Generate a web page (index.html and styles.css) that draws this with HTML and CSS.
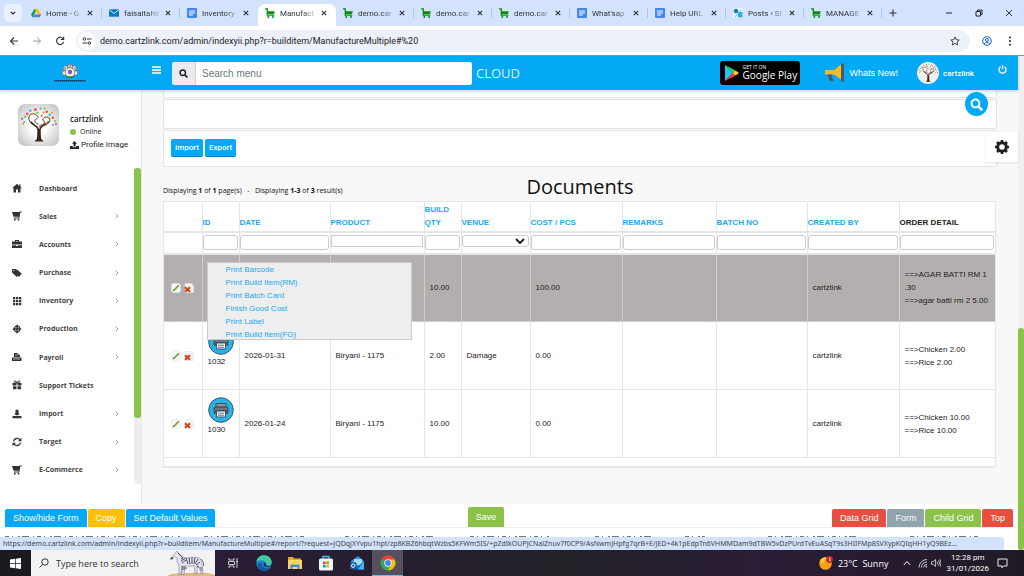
FILE: index.html
```html
<!DOCTYPE html>
<html lang="en">
<head>
<meta charset="utf-8">
<title>Manufacture Multiple</title>
<link rel="stylesheet" href="styles.css">
</head>
<body>
<svg class="sprite" aria-hidden="true">
  <symbol id="cart" viewBox="0 0 10 10"><path d="M0 .9h2.3v6.3h7" fill="none" stroke="#0b8a0b" stroke-width="1.3"/><path d="M2.3 3.200h7.5L9 6H2.3z" fill="#0b8a0b"/><circle cx="3.3" cy="9" r="1" fill="#0b8a0b"/><circle cx="8" cy="9" r="1" fill="#0b8a0b"/></symbol>
  <symbol id="doc" viewBox="0 0 10 10"><rect width="10" height="10" rx="1" fill="#4285f4"/><path d="M2 3h6M2 5h6M2 7h4" stroke="#fff" stroke-width="1"/></symbol>
  <symbol id="x" viewBox="0 0 6 6"><path d="M.8.8l4.4 4.4M5.2.8L.8 5.2" stroke="#333" stroke-width="1.1"/></symbol>
  <symbol id="lens" viewBox="0 0 10 10"><circle cx="4.2" cy="4.2" r="3" fill="none" stroke="currentColor" stroke-width="1.6"/><path d="M6.4 6.4L9.4 9.4" stroke="currentColor" stroke-width="1.9"/></symbol>
  <symbol id="tree" viewBox="0 0 40 40">
    <path d="M19 24h3l.5 9.500 2.500 2.500h-9l2.500-2.500z" fill="#3a2317"/>
    <path d="M20 25c-1-4-4-5-8-8M21 25c1-4 4-5 9-8" fill="none" stroke="#3a2317" stroke-width="1.500"/>
    <path d="M19 22c-5-2-10-6-8-11 2-3 7-3 9 2M20 22c5-1 12-3 11-8-2-3-6-2-7 1M20 19c-5-1-4-5-1-5M21 20c5 1 6-4 3-5" fill="none" stroke="#4a2d20" stroke-width=".9"/>
    <g fill="#e8436b"><circle cx="9" cy="9" r="1.300"/><circle cx="17" cy="5" r="1.300"/><circle cx="28" cy="7" r="1.200"/><circle cx="34" cy="13" r="1.200"/><circle cx="4" cy="14" r="1"/><circle cx="23" cy="11" r="1"/><circle cx="37" cy="19" r="1"/></g>
    <g fill="#46b3d8"><circle cx="12" cy="6" r="1.200"/><circle cx="22" cy="4" r="1.100"/><circle cx="31" cy="10" r="1.200"/><circle cx="6" cy="17" r="1"/><circle cx="34" cy="20" r="1"/></g>
    <g fill="#7fc241"><circle cx="7" cy="12" r="1.200"/><circle cx="19" cy="8" r="1.200"/><circle cx="26" cy="4" r="1"/><circle cx="30" cy="13" r="1"/><circle cx="36" cy="16" r="1"/></g>
    <g fill="#f29a2e"><circle cx="14" cy="9" r="1"/><circle cx="25" cy="8" r="1.100"/><circle cx="5" cy="19" r="1"/><circle cx="33" cy="8" r="1"/><circle cx="28" cy="18" r="1"/></g>
  </symbol>
  <symbol id="chev" viewBox="0 0 4 6"><path d="M.8.8L3 3 .8 5.200" fill="none" stroke="#888" stroke-width=".8"/></symbol>
  <symbol id="basket" viewBox="0 0 10 10"><path d="M0 1h7.500L7 5.800H1.500zM1.800 6.600h5.400v.8H1.800zM7.500.4H10v.9H8.400L7.300 7.400h-.9z"/><circle cx="2.800" cy="8.700" r=".9"/><circle cx="6.500" cy="8.700" r=".9"/></symbol>
  <symbol id="printer" viewBox="0 0 26 26"><circle cx="13" cy="13" r="12.300" fill="#27b3e6" stroke="#3c5663" stroke-width="1"/><path d="M8 6.500h10v3.500H8z" fill="#8a979d" stroke="#344049" stroke-width=".8"/><rect x="5.500" y="9.500" width="15" height="7.500" rx="1.500" fill="#4b5760"/><path d="M7 12h12" stroke="#8c9aa2"/><path d="M8.500 14h9v6h-9z" fill="#e4ecef" stroke="#344049" stroke-width=".8"/><path d="M10 16.300h6M10 18.300h6" stroke="#667" stroke-width=".8"/></symbol>
  <symbol id="pencil" viewBox="0 0 10 10"><rect x=".5" y=".5" width="9" height="9" rx="2" fill="#f7f7f5" stroke="#e6e6e4" stroke-width=".5"/><path d="M1.500 8.500l1-2.200 1.300 1.200z" fill="#3b5b25"/><path d="M2.700 6.500l3.400-3.700L7.400 4 4 7.600z" fill="#6aa83a"/><path d="M6.100 2.800l1-1 1.400 1.300-1.100 1z" fill="#c66a4a"/></symbol>
  <symbol id="del" viewBox="0 0 10 10"><path d="M1 .5h6.500L9.500 3v6.500H1z" fill="#f6f3f2" stroke="#e4e0de" stroke-width=".5"/><path d="M1 4.200l5 4.600M6 4.200L1 8.800" stroke="#d8401c" stroke-width="2.200"/></symbol>
</svg>

<header class="tabs">
  <button class="tab-menu" aria-label="Search tabs"><svg width="6" height="4" viewBox="0 0 6 4"><path d="M.8.8L3 3 5.200.8" fill="none" stroke="#222" stroke-width="1.200"/></svg></button>
  <div class="tab"><svg class="fav" viewBox="0 0 10 10"><path d="M3.500.8h3L10 6.600H7z" fill="#fbbc04"/><path d="M3.500.8L0 6.600 1.500 9.200 5 3.300z" fill="#0f9d58"/><path d="M3 6.600h7L8.500 9.200h-7z" fill="#4285f4"/><path d="M7.300 6.600H10L8.500 9.200z" fill="#ea4335"/></svg><span class="tab-title">Home - G</span><svg class="close"><use href="#x"/></svg></div>
  <div class="tab"><svg class="fav" viewBox="0 0 10 10"><path d="M0 1.300h10v7.400H0z" fill="#0a78c2"/><path d="M0 1.500l5 4 5-4" fill="none" stroke="#cfe9fb"/></svg><span class="tab-title">faisaltahir</span><svg class="close"><use href="#x"/></svg></div>
  <div class="tab before-active"><svg class="fav"><use href="#doc"/></svg><span class="tab-title">Inventory</span><svg class="close"><use href="#x"/></svg></div>
  <div class="tab active"><svg class="fav"><use href="#cart"/></svg><span class="tab-title">Manufact</span><svg class="close"><use href="#x"/></svg></div>
  <div class="tab"><svg class="fav"><use href="#cart"/></svg><span class="tab-title">demo.car</span><svg class="close"><use href="#x"/></svg></div>
  <div class="tab"><svg class="fav"><use href="#cart"/></svg><span class="tab-title">demo.car</span><svg class="close"><use href="#x"/></svg></div>
  <div class="tab"><svg class="fav"><use href="#cart"/></svg><span class="tab-title">demo.car</span><svg class="close"><use href="#x"/></svg></div>
  <div class="tab"><svg class="fav"><use href="#doc"/></svg><span class="tab-title">What'sap</span><svg class="close"><use href="#x"/></svg></div>
  <div class="tab"><svg class="fav"><use href="#doc"/></svg><span class="tab-title">Help URL</span><svg class="close"><use href="#x"/></svg></div>
  <div class="tab"><svg class="fav" viewBox="0 0 10 10"><rect width="10" height="10" fill="#e8f4fa"/><circle cx="3" cy="3" r="2.300" fill="#27769c"/><rect x="5" y="4" width="4.500" height="5.500" fill="#35b0dd"/><path d="M2 9l6-7" stroke="#69c3e4"/></svg><span class="tab-title">Posts ‹ St</span><svg class="close"><use href="#x"/></svg></div>
  <div class="tab"><svg class="fav"><use href="#cart"/></svg><span class="tab-title">MANAGE</span><svg class="close"><use href="#x"/></svg></div>
  <button class="new-tab" aria-label="New tab"><svg width="8" height="8" viewBox="0 0 8 8"><path d="M4 .5v7M.5 4h7" stroke="#333" stroke-width="1.100"/></svg></button>
  <div class="window-buttons">
    <button aria-label="Minimize"><svg viewBox="0 0 8 8"><path d="M1 4h6" stroke="#222"/></svg></button>
    <button aria-label="Restore"><svg viewBox="0 0 8 8"><path d="M1 2.500h4.500V7H1zM2.500 2.500V1H7v4.500H5.500" fill="none" stroke="#222"/></svg></button>
    <button aria-label="Close"><svg viewBox="0 0 8 8"><path d="M1 1l6 6M7 1L1 7" stroke="#222" stroke-width=".9"/></svg></button>
  </div>
</header>

<nav class="toolbar">
  <button aria-label="Back"><svg viewBox="0 0 10 10"><path d="M9 5H1.500M5 1.500L1.500 5 5 8.500" fill="none" stroke="#333" stroke-width="1.100"/></svg></button>
  <button aria-label="Forward"><svg viewBox="0 0 10 10"><path d="M1 5h7.500M5 1.500L8.500 5 5 8.500" fill="none" stroke="#999" stroke-width="1"/></svg></button>
  <button aria-label="Reload"><svg viewBox="0 0 10 10"><path d="M8.300 3.200A3.600 3.600 0 1 0 8.600 5.800M8.700.8v2.700H6" fill="none" stroke="#333" stroke-width="1.100"/></svg></button>
  <div class="address">
    <span class="site-info"><svg viewBox="0 0 10 10"><path d="M5 3h4.500M.5 7H5" stroke="#333"/><circle cx="2.500" cy="3" r="1.300" fill="none" stroke="#333"/><circle cx="7.300" cy="7" r="1.300" fill="none" stroke="#333"/></svg></span>
    <input class="url" type="text" aria-label="Address" value="demo.cartzlink.com/admin/indexyii.php?r=builditem/ManufactureMultiple#%20">
    <svg class="star" viewBox="0 0 10 10"><path d="M5 .9l1.200 2.800 3 .3L7 6l.7 3L5 7.400 2.300 9 3 6 .8 4l3-.3z" fill="none" stroke="#333" stroke-width=".9"/></svg>
  </div>
  <button aria-label="Profile"><svg class="person" viewBox="0 0 10 10" fill="none" stroke="#1f5fd0"><circle cx="5" cy="5" r="4.300"/><circle cx="5" cy="4" r="1.500"/><path d="M2.200 8c1-2 4.600-2 5.600 0"/></svg></button>
  <button aria-label="More"><svg viewBox="0 0 10 10"><circle cx="5" cy="1.300" r=".9"/><circle cx="5" cy="5" r=".9"/><circle cx="5" cy="8.700" r=".9"/></svg></button>
</nav>

<div class="window">
  <div class="page">
    <header class="app-header">
      <a class="logo" href="#" aria-label="Home"><svg viewBox="0 0 34 20"><g fill="#f5f0e6" stroke="#555" stroke-width=".6"><circle cx="17" cy="3.500" r="2.300"/><circle cx="12.500" cy="5" r="2.300"/><circle cx="21.500" cy="5" r="2.300"/><circle cx="11.500" cy="10" r="2.300"/><circle cx="22.500" cy="10" r="2.300"/><circle cx="17" cy="9.500" r="4.800"/></g><circle cx="17" cy="9" r="2.200" fill="#8a5b94"/><path d="M13 14h8" stroke="#3e7a44" stroke-width="1.500"/><g fill="#7a2a70"><circle cx="17" cy="3" r=".8"/><circle cx="12" cy="5" r=".8"/><circle cx="22" cy="5" r=".8"/></g><path d="M1 17.800h32" stroke="#0c3350" stroke-width="1.500" stroke-dasharray="1.600 .4"/></svg></a>
      <button class="burger" aria-label="Menu"><svg viewBox="0 0 9 8"><path d="M0 1h9M0 4h9M0 7h9" stroke="#fff" stroke-width="1.500"/></svg></button>
      <div class="search"><label for="q" aria-label="Search menu"><svg><use href="#lens"/></svg></label><input id="q" type="text" placeholder="Search menu"></div>
      <span class="cloud">CLOUD</span>
      <a class="play" href="#"><svg viewBox="0 0 14 16"><path d="M0 0v16l7.500-8z" fill="#1cc8f0"/><path d="M0 0l10.500 5.500L7.500 8z" fill="#2bd36b"/><path d="M0 16l10.500-5.500L7.500 8z" fill="#ef4050"/><path d="M10.500 5.500L14 8l-3.500 2.500L7.500 8z" fill="#ffca28"/></svg><span class="play-text"><small>GET IT ON</small><b>Google Play</b></span></a>
      <a class="news" href="#"><svg viewBox="0 0 20 20"><path d="M0 7h9l7-5.500v15L9 11.500H0z" fill="#fbb829"/><path d="M16 .5h3v18h-3zM2.500 11.500h4l2 6.500h-4z" fill="#4a5a68"/></svg><span>Whats New!</span></a>
      <a class="user" href="#"><svg><use href="#tree"/></svg><span>cartzlink</span></a>
      <button class="power" aria-label="Log out"><svg viewBox="0 0 8 8"><path d="M2.200 1.600a3.100 3.100 0 1 0 3.600 0M4 .3v3.500" fill="none" stroke="#fff" stroke-width="1.200"/></svg></button>
    </header>

    <div class="body">
      <aside class="sidebar">
        <section class="profile">
          <svg class="photo"><use href="#tree"/></svg>
          <div class="who"><b>cartzlink</b><span class="online"><i></i>Online</span><a href="#"><svg viewBox="0 0 9 8"><path d="M4.500 0L7 2.800H5.500v2.700h-2V2.800H2zM0 5h2.700v1.300h3.600V5H9v3H0z" fill="#222"/></svg>Profile Image</a></div>
        </section>
        <div class="menu-wrap">
          <ul class="menu">
            <li><a href="#"><svg viewBox="0 0 10 10"><path d="M5 .8L0 5.300h1.500V9.500H4V6.500h2v3h2.500V5.300H10L8.500 4V1.300H7.300V2.900z"/></svg><span>Dashboard</span></a></li>
            <li><a href="#"><svg><use href="#basket"/></svg><span>Sales</span><svg class="chev"><use href="#chev"/></svg></a></li>
            <li><a href="#"><svg viewBox="0 0 10 10"><path d="M3 1h4v1.500h3V5.500H0V2.500h3zM4 2v.5h2V2zM0 6.200h4V7h2v-.8h4V9H0z"/></svg><span>Accounts</span><svg class="chev"><use href="#chev"/></svg></a></li>
            <li><a href="#"><svg viewBox="0 0 10 10"><path d="M0 1h3.500L8 5.500 4.800 9 0 4.500zM4.500 1L9.800 5.700 6.500 9.300"/><circle cx="1.700" cy="2.600" r=".7" fill="#fff"/></svg><span>Purchase</span><svg class="chev"><use href="#chev"/></svg></a></li>
            <li><a href="#"><svg viewBox="0 0 10 10"><path d="M1 1h2.300v2.300H1zM4 1h2.300v2.300H4zM7 1h2.300v2.300H7zM1 4h2.300v2.300H1zM4 4h2.300v2.300H4zM7 4h2.300v2.300H7zM1 7h2.300v2.300H1zM4 7h2.300v2.300H4zM7 7h2.300v2.300H7z"/></svg><span>Inventory</span><svg class="chev"><use href="#chev"/></svg></a></li>
            <li><a href="#"><svg viewBox="0 0 10 10"><circle cx="5" cy="5" r="2.800" fill="none" stroke="#333" stroke-width="1.200"/><path d="M5 .8v8.400M.8 5h8.400" stroke="#333" stroke-width="1.500"/></svg><span>Production</span><svg class="chev"><use href="#chev"/></svg></a></li>
            <li><a href="#"><svg viewBox="0 0 10 10"><path d="M2 5V1h3l3 2.500V5zM0 5.500h9.500V9H0z"/><path d="M3 3h3M1 7h7" stroke="#fff" stroke-width=".6"/></svg><span>Payroll</span><svg class="chev"><use href="#chev"/></svg></a></li>
            <li><a href="#"><svg viewBox="0 0 10 10"><path d="M.5 3h4v2.500h-4zM5.500 3h4v2.500h-4zM1 6.200h3.500v3H1zM5.500 6.200H9v3H5.500z"/><path d="M5 3C3 3 2 2.500 2.200 1.300 3.500.5 4.500 1.300 5 3 5.500 1.300 6.500.5 7.800 1.300 8 2.500 7 3 5 3z" fill="none" stroke="#333"/></svg><span>Support Tickets</span></a></li>
            <li><a href="#"><svg viewBox="0 0 10 10"><path d="M3.500.8h3V4l1 1-1.500 1.300H4L2.500 5l1-1zM.5 7h9v2.300h-9z"/></svg><span>Import</span><svg class="chev"><use href="#chev"/></svg></a></li>
            <li><a href="#"><svg viewBox="0 0 10 10"><path d="M1.500 4.300A3.600 3.600 0 0 1 8 3M8.500 5.700A3.600 3.600 0 0 1 2 7" fill="none" stroke="#333" stroke-width="1.300"/><path d="M9.500.8v3.400H6zM.5 9.200V5.800H4z"/></svg><span>Target</span><svg class="chev"><use href="#chev"/></svg></a></li>
            <li><a href="#"><svg><use href="#basket"/></svg><span>E-Commerce</span><svg class="chev"><use href="#chev"/></svg></a></li>
          </ul>
          <div class="menu-track"><div class="menu-thumb"></div></div>
        </div>
      </aside>

      <main class="content">
        <button class="find" aria-label="Search"><svg><use href="#lens"/></svg></button>
        <button class="settings" aria-label="Settings"><svg viewBox="0 0 16 16"><circle cx="8" cy="8" r="4.300" fill="none" stroke="#222" stroke-width="3"/><path d="M8 1v3M8 12v3M1 8h3M12 8h3M3 3l2 2M11 11l2 2M3 13l2-2M11 5l2-2" stroke="#222" stroke-width="2.600"/></svg></button>
        <div class="panel cut"></div>
        <div class="panel blank"></div>
        <div class="panel tools"><button>Import</button><button>Export</button></div>
        <div class="caption">
          <p>Displaying <b>1</b> of <b>1</b> page(s) &nbsp; - &nbsp; Displaying <b>1-3</b> of <b>3</b> result(s)</p>
          <h1>Documents</h1>
        </div>
        <div class="grid">
          <table>
            <colgroup><col class="w38"><col class="w37"><col class="w91"><col class="w94"><col class="w37"><col class="w69"><col class="w92"><col class="w94"><col class="w91"><col class="w92"><col class="w97"></colgroup>
            <thead>
              <tr class="heads"><th></th><th><a href="#">ID</a></th><th><a href="#">DATE</a></th><th><a href="#">PRODUCT</a></th><th><a href="#">BUILD QTY</a></th><th><a href="#">VENUE</a></th><th><a href="#">COST / PCS</a></th><th><a href="#">REMARKS</a></th><th><a href="#">BATCH NO</a></th><th><a href="#">CREATED BY</a></th><th>ORDER DETAIL</th></tr>
              <tr class="filters"><td></td><td><input type="text" aria-label="ID"></td><td><input type="text" aria-label="Date"></td><td><input class="flat" type="text" aria-label="Product"></td><td><input type="text" aria-label="Build qty"></td><td><select aria-label="Venue"><option></option></select></td><td><input type="text" aria-label="Cost / pcs"></td><td><input type="text" aria-label="Remarks"></td><td><input type="text" aria-label="Batch no"></td><td><input type="text" aria-label="Created by"></td><td><input type="text" aria-label="Order detail"></td></tr>
            </thead>
            <tbody>
              <tr class="selected"><td class="act"><svg><use href="#pencil"/></svg><svg><use href="#del"/></svg></td><td class="pop-cell">
                <ul class="print-menu"><li><a href="#">Print Barcode</a></li><li><a href="#">Print Build Item(RM)</a></li><li><a href="#">Print Batch Card</a></li><li><a href="#">Finish Good Cost</a></li><li><a href="#">Print Label</a></li><li><a href="#">Print Build Item(FG)</a></li></ul>
              </td><td></td><td></td><td>10.00</td><td></td><td>100.00</td><td></td><td></td><td>cartzlink</td><td>==&gt;AGAR BATTI RM 1 .30<br>==&gt;agar batti rm 2 5.00</td></tr>
              <tr><td class="act"><svg><use href="#pencil"/></svg><svg><use href="#del"/></svg></td><td class="id"><svg><use href="#printer"/></svg>1032</td><td>2026-01-31</td><td>Biryani - 1175</td><td>2.00</td><td>Damage</td><td>0.00</td><td></td><td></td><td>cartzlink</td><td>==&gt;Chicken 2.00<br>==&gt;Rice 2.00</td></tr>
              <tr><td class="act"><svg><use href="#pencil"/></svg><svg><use href="#del"/></svg></td><td class="id"><svg><use href="#printer"/></svg>1030</td><td>2026-01-24</td><td>Biryani - 1175</td><td>10.00</td><td></td><td>0.00</td><td></td><td></td><td>cartzlink</td><td>==&gt;Chicken 10.00<br>==&gt;Rice 10.00</td></tr>
            </tbody>
          </table>
        </div>
      </main>
    </div>

    <footer class="actions">
      <div class="group"><button class="blue">Show/hide Form</button><button class="amber">Copy</button><button class="blue">Set Default Values</button></div>
      <button class="green save">Save</button>
      <div class="group end"><button class="red">Data Grid</button><button class="slate">Form</button><button class="green">Child Grid</button><button class="red">Top</button></div>
    </footer>
    <div class="status-zone">
      <svg class="fringe" viewBox="0 0 1018 2" preserveAspectRatio="none"><path d="M5 1.500h175M204 1.500h100M345 1.500h90M470 1.500h80M595 1.500h60M685 1.500h20M768 1.500h92M910 1.500h70" stroke="#777" stroke-width="1" stroke-dasharray="4 3 1 5 2 2 7 4 1 3"/></svg>
      <div class="status">https://demo.cartzlink.com/admin/indexyii.php?r=builditem/ManufactureMultiple#/report/?request=JQDqjXYvpu1hpt/zp8KBZ6hbqtWzbs5KFWm5IS/+pZdIkOUPJCNalZnuv7f0CP9/AsNwmJHpfg7qrB+E/JED+4k1pEdpTn6VHMMDam9dTBW5vDzPUrdTvEuASqT9s3HIIFMp8SVXypKQIqHH1yQ9BEz...</div>
    </div>
  </div>
  <div class="page-track"><div class="page-thumb"></div></div>
</div>

<footer class="taskbar">
  <button class="start" aria-label="Start"><svg viewBox="0 0 11 11"><path d="M0 1.500L5 .8v4.400H0zM5.700.7L11 0v5.200H5.700zM0 5.900h5v4.300l-5-.7zM5.700 5.900H11V11l-5.300-.7z" fill="#fff"/></svg></button>
  <div class="task-search"><svg class="task-lens" viewBox="0 0 10 10"><circle cx="6" cy="4" r="3.200" fill="none" stroke="#222" stroke-width=".9"/><path d="M3.700 6.300L.5 9.500" stroke="#222" stroke-width=".9"/></svg><input type="text" aria-label="Search" placeholder="Type here to search">
    <svg class="zebra" viewBox="0 0 48 26">
      <path d="M0 26c4-3 14-3 22-3s19-1 26 2v1z" fill="#e2b683"/>
      <path d="M4 8l4-4.500L10 1l2 2.500 4 4c5 1 10-1 15 0 3 1 4 4 4 7l1 9h-2l-2-7-2-1 0 8h-2l-1-8c-3 1-6 1-9 0l-1 9h-2l0-9-1 9h-2l0-10c-2-1-2-3-2-6l-2-2-5 3z" fill="#e6e3ee" stroke="#6a6580" stroke-width=".5"/>
      <path d="M11 3l5 5M14 9l2-1M14 11l4-2.500M15 13l4-3M19 8l2 6M22 8l1 6M25 7.500v6.500M28 7.500l-1 6M31 9l-3 5M33 12l-4 3M15 17h3M15 19h3M18 18h2M30 17h2M33 18h2M33.500 20h2" stroke="#4b4666" stroke-width="1"/>
      <path d="M4 8l2 .8" stroke="#333" stroke-width="1.500"/><path d="M34 9c2 2 3 4 2.500 7" fill="none" stroke="#4b4666" stroke-width=".8"/>
    </svg>
  </div>
  <div class="apps">
    <button aria-label="Task view"><svg viewBox="0 0 12 12"><path d="M2 1v2h5V1M2 11V9h5v2M1.500 4.500h6v3h-6zM10 1v10M9 4.500h2" fill="none" stroke="#ddd" stroke-width=".9"/></svg></button>
    <button aria-label="Edge"><svg class="big" viewBox="0 0 16 16"><circle cx="8" cy="8" r="7.700" fill="#1687d4"/><path d="M.5 7C1 3 4 .3 8 .3c5 0 7.700 3.700 7.700 6.700 0 3-3 4-5.500 3.200C11 8 10 6 7 5.500 4 5 2 5.500.5 7z" fill="#45c9a0"/><path d="M6 8c-1 3 2 6 7 5-3 3.500-9 3.200-11-1C1 9 3 7 6 8z" fill="#1258a8"/><path d="M8 8c1.500-.5 2.500 1 1.700 2.300 1.500 1.200 3.500.9 5.300-.1-1 1.600-3 2-4.800 1.600C8 11.300 6.800 9.500 8 8z" fill="#2a2030"/></svg></button>
    <button aria-label="File Explorer"><svg class="big" viewBox="0 0 16 16"><path d="M1 2h5l1 1.500h7V8H1z" fill="#e5a92a"/><path d="M1 5h14v9H1z" fill="#ffd561"/><path d="M3.500 9.500h9V14h-2v-2h-5v2h-2z" fill="#3d8fd1"/></svg></button>
    <button aria-label="Store"><svg class="big" viewBox="0 0 16 16"><path d="M5 4V1.500h6V4" fill="none" stroke="#58b7e8" stroke-width="1.300"/><rect x="1" y="3.500" width="14" height="12" rx="1.500" fill="#f2f6fa"/><path d="M5 6.500h2.700v2.700H5z" fill="#f25022"/><path d="M8.300 6.500H11v2.700H8.300z" fill="#7fba00"/><path d="M5 9.800h2.700v2.700H5z" fill="#00a4ef"/><path d="M8.300 9.800H11v2.700H8.300z" fill="#ffb900"/></svg></button>
    <button aria-label="Outlook"><svg class="big" viewBox="0 0 16 16"><path d="M2 6l7-5 6 5v8H3z" fill="#2f8fe8"/><path d="M5 4h8v6H5z" fill="#9fdcff"/><path d="M3 8l6 3.500L15 6v8.500H3z" fill="#1766c4"/><path d="M15 6v8.500H9z" fill="#43b5f5"/><rect x="1" y="7.500" width="6.500" height="6.500" rx="1" fill="#0e57a8"/><circle cx="4.200" cy="10.700" r="1.700" fill="none" stroke="#fff"/></svg></button>
    <button class="running" aria-label="Chrome"><svg class="big" viewBox="0 0 16 16"><circle cx="8" cy="8" r="7.500" fill="#34a853"/><path d="M8 8L1.500 4.200A7.500 7.500 0 0 1 14.500 4.200z" fill="#ea4335"/><path d="M8 4.500h6.600A7.500 7.500 0 0 1 8 15.500L11 9.700z" fill="#fbbc04"/><circle cx="8" cy="8" r="3.700" fill="#fff"/><circle cx="8" cy="8" r="2.900" fill="#4285f4"/></svg></button>
  </div>
  <div class="tray">
    <svg class="sun" viewBox="0 0 14 14"><circle cx="6.500" cy="7.500" r="6.300" fill="#f9a01b"/><path d="M1 5a6.300 6.300 0 0 1 7-3.500L3 8z" fill="#ffc83d"/><circle cx="10.500" cy="3.500" r="3.400" fill="#c42b1c"/><path d="M10 2.500l.8-.6v3.400" stroke="#fff" stroke-width=".8" fill="none"/></svg>
    <span class="weather">23°C&nbsp; Sunny</span>
    <svg class="up" viewBox="0 0 8 6"><path d="M.8 5L4 1.500 7.200 5" fill="none" stroke="#fff"/></svg>
    <svg class="net" viewBox="0 0 10 10" fill="none" stroke="#ddd" stroke-width=".9"><path d="M1 9.500A8 8 0 0 1 9 1.500M3.300 9.500A6 6 0 0 1 9 4M5.500 9.500A4 4 0 0 1 9 6.300"/><circle cx="8.300" cy="8.700" r=".6"/></svg>
    <svg class="net" viewBox="0 0 10 10" fill="none" stroke="#ddd" stroke-width=".8"><path d="M.5 3.700h1.700L4.500 1.500v7L2.200 6.300H.5zM6 3.500q1 1.500 0 3M7.500 2.300q2 2.700 0 5.400M9 1.300q2 3.700 0 7.400"/></svg>
    <span class="clock">12:28 pm<br>31/01/2026</span>
    <svg class="note" viewBox="0 0 11 11"><path d="M1 1h9v7H6.500L5 9.800V8H1z" fill="none" stroke="#fff" stroke-width=".9"/></svg>
  </div>
</footer>
</body>
</html>
```

FILE: styles.css
```css
* { box-sizing: border-box; }
body { margin: 0; min-height: 100vh; display: flex; flex-direction: column; font-family: "Open Sans", sans-serif; font-size: 8px; color: #222; background: #fff; }
button { border: 0; padding: 0; margin: 0; background: none; font: inherit; color: inherit; display: flex; align-items: center; justify-content: center; }
input, select { font: inherit; color: inherit; min-width: 0; margin: 0; }
a { color: inherit; text-decoration: none; }
ul { list-style: none; margin: 0; padding: 0; }
svg { display: block; flex: none; }
.sprite { position: absolute; width: 0; height: 0; }

/* browser chrome */
.tabs { display: flex; height: 26px; background: #d3e3fd; font-family: Roboto, sans-serif; }
.tab-menu { width: 18px; height: 18px; margin: 4px 2px 4px 4px; border-radius: 5px; background: #e9f1fe; }
.tab { flex: 0 1 78px; min-width: 0; display: flex; align-items: center; padding: 0 9px 0 7px; position: relative; }
.tab::after { content: ""; position: absolute; right: 0; top: 8px; width: 1px; height: 10px; background: #a8c7fa; }
.tab.active { background: #fff; border-radius: 7px 7px 0 0; margin-top: 4px; padding-bottom: 4px; }
.tab.active::after, .tab.before-active::after { display: none; }
.fav { width: 10px; height: 10px; }
.tab-title { flex: 1; margin: 0 3px 0 5px; white-space: nowrap; color: #333; -webkit-mask-image: linear-gradient(90deg, #000 60%, transparent); mask-image: linear-gradient(90deg, #000 60%, transparent); }
.close { width: 6px; height: 6px; }
.new-tab { width: 22px; }
.window-buttons { margin-left: auto; display: flex; }
.window-buttons button { width: 30px; }
.window-buttons svg { width: 8px; height: 8px; }
.toolbar { display: flex; align-items: center; height: 30px; padding: 0 3px 0 2px; border-bottom: 1px solid #7c98a8; background: #fff; }
.toolbar button { width: 23px; }
.toolbar svg { width: 10px; height: 10px; }
.address { flex: 1; display: flex; align-items: center; height: 22px; margin: 0 5px; padding: 0 10px 0 2px; border-radius: 11px; background: #ecf1fa; }
.site-info { display: flex; align-items: center; justify-content: center; width: 18px; height: 18px; border-radius: 50%; background: #fff; }
.url { flex: 1; border: 0; padding: 0 0 0 4px; background: none; font: 9px Roboto, sans-serif; outline: 0; }

/* page frame */
.window { flex: 1; display: flex; }
.page { flex: 1; min-width: 0; display: flex; flex-direction: column; }
.page-track { width: 6px; display: flex; flex-direction: column; justify-content: flex-end; background: #f0f0f0; }
.page-thumb { height: 45%; border-radius: 3px; background: #8bc34a; }
.app-header { display: flex; align-items: center; height: 34px; padding-right: 11px; background: #03a9f4; color: #fff; box-shadow: 0 1px 3px rgba(0,0,0,.2); position: relative; z-index: 2; }
.logo { width: 34px; margin-left: 53px; }
.burger { width: 9px; height: 8px; margin: 0 11px 6px 65px; }
.burger svg { width: 9px; }
.search { display: flex; width: 300px; height: 23px; border-radius: 3px; overflow: hidden; background: #fff; }
.search label { display: flex; align-items: center; justify-content: center; width: 23px; background: #e9ecef; color: #222; }
.search label svg { width: 9px; height: 9px; }
.search input { flex: 1; border: 0; border-left: 1px solid #ced4da; padding: 0 6px; font: 10px "Liberation Sans", Arial, sans-serif; }
.search input::placeholder { color: #6c757d; }
.cloud { margin-left: 4px; font: 13px "Open Sans", sans-serif; color: #d9f2fd; }
.play { display: flex; align-items: center; gap: 4px; width: 80px; height: 24px; margin-left: auto; padding-left: 5px; border-radius: 3px; background: #000; }
.play svg { width: 14px; height: 16px; }
.play-text { display: flex; flex-direction: column; }
.play small { font-size: 5px; line-height: 5px; }
.play b { font: 500 10px/11px "Open Sans", sans-serif; white-space: nowrap; }
.news { display: flex; align-items: center; gap: 5px; margin-left: 25px; font: 9px "Liberation Sans", Arial, sans-serif; }
.news svg { width: 20px; height: 20px; }
.user { display: flex; align-items: center; gap: 4px; margin-left: 19px; font: 500 8px Roboto, sans-serif; }
.user svg { width: 22px; height: 22px; border-radius: 50%; background: #f1f1f1; }
.power { margin: 0 0 8px 24px; }
.power svg { width: 9px; height: 9px; }
.body { flex: 1; display: flex; }

/* sidebar */
.sidebar { width: 142px; display: flex; flex-direction: column; background: #fff; border-right: 1px solid #e6e6e6; padding: 14px 0 20px; }
.profile { display: flex; gap: 11px; padding-left: 18px; height: 64px; }
.photo { width: 41px; height: 42px; border-radius: 7px; background: radial-gradient(#fff 30%, #bbb); }
.who { display: flex; flex-direction: column; padding-top: 8px; line-height: 13px; white-space: nowrap; }
.who b { font-weight: 600; }
.online { display: flex; align-items: center; gap: 4px; font-size: 7px; }
.online i { width: 6px; height: 6px; border-radius: 50%; background: #8bc34a; }
.who a { display: flex; align-items: center; gap: 2px; font-family: Roboto, sans-serif; }
.who a svg { width: 9px; height: 8px; }
.menu-wrap { flex: 1; display: flex; }
.menu { flex: 1; display: grid; grid-auto-rows: 1fr; padding-top: 6px; }
.menu a { height: 100%; display: flex; align-items: center; padding: 0 15px 0 12px; font-size: 7px; font-weight: 700; color: #444; }
.menu svg { width: 10px; height: 10px; fill: #333; }
.menu span { flex: 1; margin-left: 17px; }
.menu .chev { width: 4px; height: 6px; }
.menu-track { width: 7px; background: #eee; border-radius: 3px; }
.menu-thumb { height: 79%; background: #8bc34a; border-radius: 3px; }

/* content */
.content { flex: 1; min-width: 0; padding: 0 21px 20px; background: #f8f8f8; position: relative; font-family: "Liberation Sans", Arial, sans-serif; }
.find { position: absolute; right: 30px; top: 2px; width: 23px; height: 24px; border-radius: 50%; background: #03a9f4; color: #fff; }
.find svg { width: 13px; height: 13px; }
.settings { position: absolute; right: 0; top: 42px; width: 33px; height: 30px; background: #fff; box-shadow: 0 1px 2px rgba(0,0,0,.1); }
.settings svg { width: 16px; height: 16px; }
.panel { background: #fff; border: 1px solid #e2e4e6; border-radius: 2px; margin-bottom: 1px; }
.panel.cut { height: 8px; border-top: 0; }
.panel.blank { height: 30px; }
.panel.tools { height: 37px; margin: 0; padding: 8px 7px; display: flex; gap: 2px; }
.tools button { height: 18px; padding: 0 4px; border-radius: 2px; background: #03a9f4; color: #fff; font: 500 8px Roboto, sans-serif; border-bottom: 1px solid #0288c4; }
.caption { display: grid; grid-template-columns: 1fr auto 1fr; align-items: end; height: 34px; padding-bottom: 2px; font-family: "Open Sans", sans-serif; color: #111; }
.caption p { margin: 0 0 2px; font-size: 7px; line-height: 12px; white-space: nowrap; }
.caption h1 { margin: 0; font-size: 20px; line-height: 24px; font-weight: 400; }
.grid { background: #fff; border: 1px solid #e4e6e8; border-top: 0; margin-right: 1px; padding-bottom: 8px; box-shadow: 0 1px 1px rgba(0,0,0,.05); }
table { width: 100%; table-layout: fixed; border-collapse: collapse; font-size: 8px; line-height: 13px; }
th, td { border: 1px solid #e3e6ea; padding: 0 5px; text-align: left; }
tr > :first-child { border-left: 0; }
tr > :last-child { border-right: 0; }
th { padding: 0; vertical-align: bottom; }
th a { color: #1ba8f0; }
.w38 { width: 38px; } .w37 { width: 37px; } .w91 { width: 91px; } .w94 { width: 94px; } .w69 { width: 69px; } .w92 { width: 92px; } .w97 { width: 96px; }
.heads { height: 30px; }
.heads th { padding-bottom: 2px; border-bottom-width: 2px; }
.filters { height: 22px; }
.filters td { padding: 2px 1px 0 0; vertical-align: top; border-bottom-width: 2px; }
.filters input, .filters select { display: block; width: 100%; height: 15px; border: 1px solid #ccc; border-radius: 3px; background: #fff; }
.filters input.flat { height: 12px; border-radius: 0; }
.filters select { height: 12px; padding: 0; }
tbody tr { height: 68px; }
.selected { background: #b3afae; }
.selected td { border-color: #cfcdcc; }
.act { padding: 5px 0 0 7px; white-space: nowrap; }
.act svg { display: inline-block; width: 10px; height: 10px; margin-right: 3px; }
.id { padding-bottom: 14px; }
.id svg { width: 26px; height: 26px; }
.pop-cell { position: relative; vertical-align: top; padding: 0; }
.print-menu { position: absolute; z-index: 1; left: 4px; top: 7px; width: 205px; height: 78px; padding-left: 18px; background: #eee; border: 1px solid #ccc; }
.print-menu a { color: #1ba8f0; }

/* bottom actions */
.actions { display: grid; grid-template-columns: 1fr auto 1fr; align-items: end; height: 24px; padding: 0 5px; background: #fff; border-bottom: 1px solid #eee; color: #fff; font: 9px "Liberation Sans", Arial, sans-serif; position: relative; }
.group { display: flex; gap: 1px; }
.end { justify-content: flex-end; }
.actions button { height: 18px; padding: 0 8px; border-radius: 2px 2px 0 0; font-size: 9px; white-space: nowrap; }
.actions .save { height: 20px; margin-right: 46px; }
.blue { background: #03a9f4; } .amber { background: #ffc107; } .green { background: #8bc34a; } .red { background: #e84e40; } .slate { background: #90a4ae; }
.status-zone { background: #fff; padding-top: 7px; }
.fringe { width: 100%; height: 2px; }
.status { margin-right: 14px; height: 13px; padding: 0 3px; background: #d3e3fd; color: #444; font: 7px/13px "Noto Sans", sans-serif; overflow: hidden; white-space: nowrap; text-overflow: ellipsis; border-radius: 0 3px 0 0; }

/* taskbar */
.taskbar { display: flex; height: 26px; background: linear-gradient(90deg, #20182a, #2a1c36 20%, #222127 55%, #2a1c36 75%, #211a26); color: #fff; }
.start { width: 31px; background: #1c1a1f; }
.start svg { width: 11px; height: 11px; }
.task-search { display: flex; align-items: center; width: 184px; padding-left: 8px; background: #f2f2f2; }
.task-lens { width: 10px; height: 10px; }
.task-search input { flex: 1; border: 0; padding: 0 0 0 7px; background: none; font-size: 9px; color: #333; }
.task-search input::placeholder { color: #333; }
.zebra { width: 48px; height: 26px; }
.apps { display: flex; padding-left: 2px; }
.apps button { width: 31px; }
.apps svg { width: 12px; height: 12px; }
.apps .big { width: 16px; height: 16px; }
.apps .running { background: #56505e; border-bottom: 1px solid #76b9ed; }
.tray { display: flex; align-items: center; margin-left: auto; padding-right: 16px; }
.sun { width: 14px; height: 14px; }
.weather { margin: 0 15px 0 5px; font-size: 9px; }
.up { width: 8px; height: 6px; margin-right: 7px; }
.net { width: 10px; height: 10px; margin-right: 3px; }
.clock { margin: 0 8px 0 2px; font: 8px/11px Roboto, sans-serif; text-align: center; }
.note { width: 11px; height: 11px; }
```
